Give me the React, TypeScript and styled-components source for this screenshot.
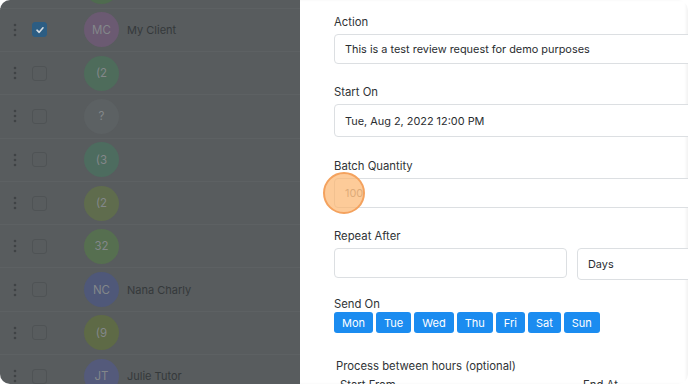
import styled, { createGlobalStyle } from "styled-components";

const GlobalStyle = createGlobalStyle`
  html, body {
    margin: 0;
    background: #ffffff;
  }
  body {
    font-family: Inter, "Noto Sans", sans-serif;
  }
`;

type Client = { initials: string; color: string; name?: string; checked?: boolean };

const clients: Client[] = [
  { initials: "", color: "#4f6b4f" },
  { initials: "MC", color: "#6b5a72", name: "My Client", checked: true },
  { initials: "(2", color: "#4e6c5b" },
  { initials: "?", color: "#5c6163" },
  { initials: "(3", color: "#4d6c5f" },
  { initials: "(2", color: "#5f6c4d" },
  { initials: "32", color: "#566f50" },
  { initials: "NC", color: "#4f5879", name: "Nana Charly" },
  { initials: "(9", color: "#5e6a46" },
  { initials: "JT", color: "#545a7b", name: "Julie Tutor" },
];

const days = ["Mon", "Tue", "Wed", "Thu", "Fri", "Sat", "Sun"];

const App = () => {
  return (
    <>
      <GlobalStyle />
      <Frame>
        <ListPane>
          <List>
            {clients.map((c, i) => (
              <Row key={i}>
                <DragHandle width="4" height="14" viewBox="0 0 4 14">
                  <circle cx="2" cy="2" r="1.3" />
                  <circle cx="2" cy="7" r="1.3" />
                  <circle cx="2" cy="12" r="1.3" />
                </DragHandle>
                <Check $checked={!!c.checked}>
                  {c.checked && (
                    <svg width="10" height="10" viewBox="0 0 10 10">
                      <path d="M2 5.2 L4.2 7.3 L8 2.8" fill="none" stroke="#d6dde3" strokeWidth="1.6" strokeLinecap="round" strokeLinejoin="round" />
                    </svg>
                  )}
                </Check>
                <Avatar $color={c.color}>{c.initials}</Avatar>
                {c.name && <Name>{c.name}</Name>}
              </Row>
            ))}
          </List>
        </ListPane>
        <Panel>
          <Form>
            <Field $mb={20}>
              <Label>Action</Label>
              <Input $h={30}>This is a test review request for demo purposes</Input>
            </Field>
            <Field $mb={21}>
              <Label>Start On</Label>
              <Input $h={33}>Tue, Aug 2, 2022 12:00 PM</Input>
            </Field>
            <Field $mb={20}>
              <Label>Batch Quantity</Label>
              <Input $h={30} $muted>
                100
                <Pointer />
              </Input>
            </Field>
            <Field $mb={16}>
              <Label>Repeat After</Label>
              <Split>
                <Input $h={30} />
                <Input $h={32}>Days</Input>
              </Split>
            </Field>
            <Field $mb={25}>
              <Label $mb={0}>Send On</Label>
              <DayRow>
                {days.map((d) => (
                  <DayButton key={d}>{d}</DayButton>
                ))}
              </DayRow>
            </Field>
            <Hours>
              <HoursTitle>Process between hours (optional)</HoursTitle>
              <HoursGrid>
                <SubLabel>Start From</SubLabel>
                <SubLabel>End At</SubLabel>
              </HoursGrid>
            </Hours>
          </Form>
        </Panel>
      </Frame>
    </>
  );
};

export default App;

const Frame = styled.div`
  width: 688px;
  height: 384px;
  display: flex;
  border-radius: 10px;
  overflow: hidden;
  position: relative;
`;

const ListPane = styled.div`
  width: 300px;
  flex-shrink: 0;
  background: #585c5e;
  overflow: hidden;
`;

const List = styled.div`
  margin-top: -34.6px;
`;

const Row = styled.div`
  height: 43.3px;
  box-sizing: border-box;
  display: flex;
  align-items: center;
  padding-left: 13px;
  border-bottom: 1px solid #5d6163;
`;

const DragHandle = styled.svg`
  fill: #3f4345;
  flex-shrink: 0;
`;

const Check = styled.div<{ $checked: boolean }>`
  width: 15px;
  height: 15px;
  box-sizing: border-box;
  margin-left: 15px;
  border-radius: 3px;
  display: flex;
  align-items: center;
  justify-content: center;
  background: ${(p) => (p.$checked ? "#2c5d83" : "transparent")};
  border: 1px solid ${(p) => (p.$checked ? "#2c5d83" : "#4f5355")};
`;

const Avatar = styled.div<{ $color: string }>`
  width: 35px;
  height: 35px;
  border-radius: 50%;
  margin-left: 37px;
  background: ${(p) => p.$color};
  color: #83878a;
  font-size: 11.5px;
  display: flex;
  align-items: center;
  justify-content: center;
  flex-shrink: 0;
`;

const Name = styled.div`
  margin-left: 8px;
  font-size: 11px;
  color: #35393b;
`;

const Panel = styled.div`
  flex: 1;
  background: #ffffff;
  padding: 14px 0 0 34px;
  overflow: hidden;
  box-shadow: inset -2px 0 3px rgba(0, 0, 0, 0.05);
`;

const Form = styled.div`
  width: 476px;
`;

const Field = styled.div<{ $mb: number }>`
  margin-bottom: ${(p) => p.$mb}px;
`;

const Label = styled.div<{ $mb?: number }>`
  font-size: 11.3px;
  line-height: 16px;
  color: #2f3336;
  margin-bottom: ${(p) => (p.$mb ?? 4)}px;
`;

const Input = styled.div<{ $h?: number; $muted?: boolean }>`
  position: relative;
  height: ${(p) => p.$h ?? 30}px;
  box-sizing: border-box;
  border: 1px solid #dcdfe2;
  border-radius: 4px;
  padding: 0 10px;
  display: flex;
  align-items: center;
  font-size: 10.9px;
  color: ${(p) => (p.$muted ? "#9a9a9a" : "#2a2d30")};
  background: #fff;
`;

const Pointer = styled.span`
  position: absolute;
  left: -12px;
  top: 50%;
  width: 42px;
  height: 42px;
  margin-top: -21px;
  box-sizing: border-box;
  border-radius: 50%;
  background: rgba(252, 178, 104, 0.68);
  border: 2px solid #f4a25e;
`;

const Split = styled.div`
  display: grid;
  grid-template-columns: 233px 1fr;
  column-gap: 10px;
  align-items: start;
`;

const DayRow = styled.div`
  display: flex;
  gap: 3px;
`;

const DayButton = styled.div`
  height: 21px;
  padding: 0 8px;
  border-radius: 3px;
  background: #1b8cf0;
  color: #ffffff;
  font-size: 11px;
  display: flex;
  align-items: center;
`;

const Hours = styled.div`
  padding-left: 2px;
`;

const HoursTitle = styled.div`
  font-size: 11.3px;
  line-height: 16px;
  color: #2f3336;
  margin-bottom: 4px;
`;

const HoursGrid = styled.div`
  display: grid;
  grid-template-columns: 243px 1fr;
  padding-left: 4px;
`;

const SubLabel = styled.div`
  font-size: 11.3px;
  color: #2f3336;
`;
